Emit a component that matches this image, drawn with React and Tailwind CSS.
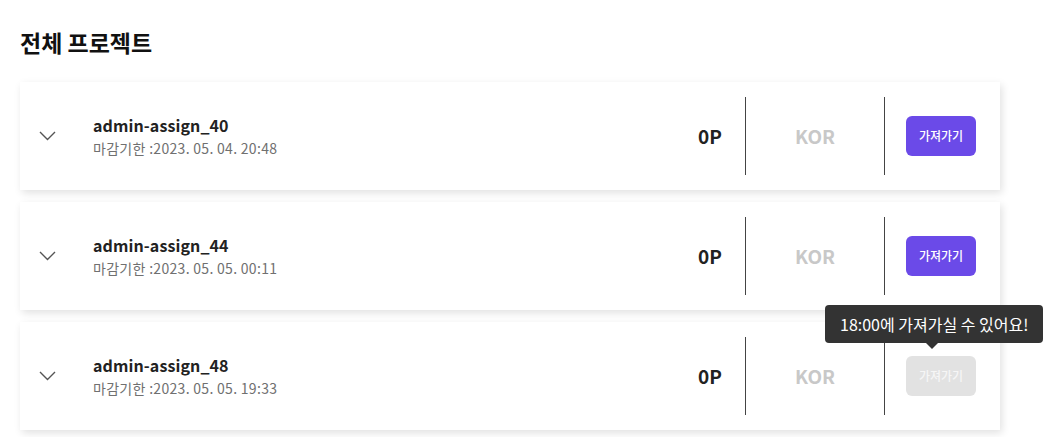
import React from 'react';

const projects = [
  { id: 40, name: 'admin-assign_40', due: '2023. 05. 04. 20:48', point: '0P', lang: 'KOR', active: true },
  { id: 44, name: 'admin-assign_44', due: '2023. 05. 05. 00:11', point: '0P', lang: 'KOR', active: true },
  { id: 48, name: 'admin-assign_48', due: '2023. 05. 05. 19:33', point: '0P', lang: 'KOR', active: false, tip: '18:00에 가져가실 수 있어요!' },
];

const Chevron = () => (
  <svg width="17" height="10" viewBox="0 0 17 10" fill="none">
    <path d="M1 1l7.5 7.5L16 1" stroke="#555" strokeWidth="1.4" />
  </svg>
);

const ProjectCard = ({ project }) => (
  <div className="flex items-center h-[108px] w-[980px] bg-white pl-[19px] pr-[24px] shadow-[2px_3px_8px_rgba(0,0,0,0.12)]">
    <Chevron />
    <div className="ml-[37px] flex-1 flex flex-col">
      <span className="text-[16px] leading-[22px] font-bold text-[#222] tracking-[0.1px]">{project.name}</span>
      <span className="text-[14px] leading-[20px] text-[#707070] mt-[2px] tracking-[0.3px]">마감기한 :{project.due}</span>
    </div>
    <span className="text-[19px] font-bold text-[#222]">{project.point}</span>
    <div className="ml-[23px] w-px h-[78px] bg-[#444]" />
    <span className="w-[138px] text-center text-[19px] font-bold text-[#c8c8c8]">{project.lang}</span>
    <div className="w-px h-[78px] bg-[#444]" />
    <div className="relative ml-[21px]">
      {project.tip && (
        <div className="absolute bottom-[53px] left-[-81px] whitespace-nowrap bg-[#333] text-white text-[16px] leading-[20px] rounded-[4px] px-[15px] py-[9px]">
          {project.tip}
          <span className="absolute left-[101px] bottom-[-6px] w-0 h-0 border-l-[6px] border-r-[6px] border-t-[6px] border-l-transparent border-r-transparent border-t-[#333]" />
        </div>
      )}
      <button
        className={`w-[70px] h-[40px] rounded-[6px] text-[12px] font-medium ${
          project.active ? 'bg-[#6b4ae8] text-white' : 'bg-[#e2e2e2] text-[#f6f6f6]'
        }`}
      >
        가져가기
      </button>
    </div>
  </div>
);

const App = () => {
  return (
    <div
      className="min-h-screen bg-white pl-[20px] pt-[27px]"
      style={{ fontFamily: '"Noto Sans CJK KR", "Noto Sans", sans-serif' }}
    >
      <h1 className="text-[23px] leading-[30px] font-bold text-[#111]">전체 프로젝트</h1>
      <div className="mt-[25px] flex flex-col gap-[12px]">
        {projects.map(p => (
          <ProjectCard key={p.id} project={p} />
        ))}
      </div>
    </div>
  );
};

export default App;
